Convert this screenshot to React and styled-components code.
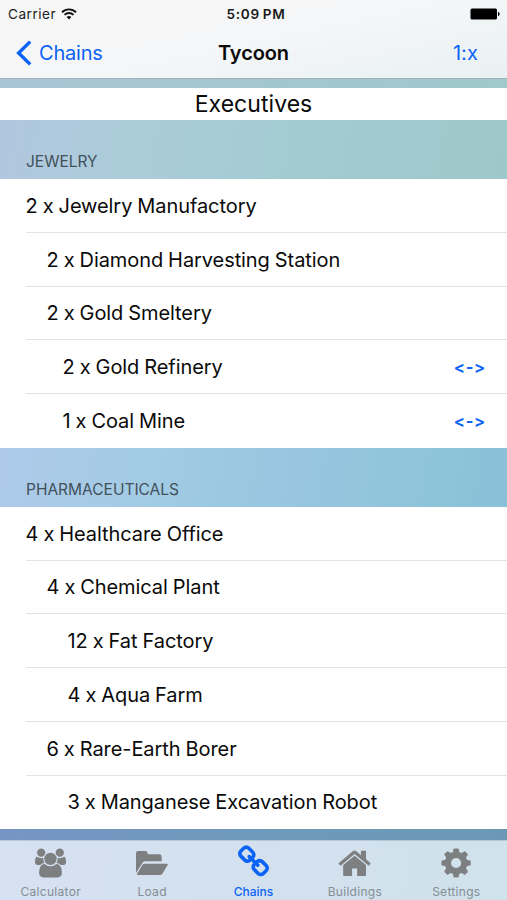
import React, { useState } from "react";
import styled, { createGlobalStyle } from "styled-components";

const GlobalStyle = createGlobalStyle`
  * {
    box-sizing: border-box;
  }
  body {
    margin: 0;
    font-family: Inter, "Liberation Sans", sans-serif;
    font-variant-ligatures: none;
    font-feature-settings: "calt" 0;
    color: #0a0a0a;
  }
`;

const Screen = styled.div`
  width: 507px;
  height: 900px;
  display: flex;
  flex-direction: column;
  overflow: hidden;
  background: linear-gradient(90deg, #7695c4, #6f9abb 50%, #6b99b5);
`;

const TopBar = styled.header`
  height: 79px;
  flex: none;
  background: linear-gradient(168deg, #f6f6f7 0%, #f5f6f7 50%, #e9f1f3 100%);
  border-bottom: 1px solid #9db3b8;
`;

const StatusBar = styled.div`
  height: 27px;
  display: grid;
  grid-template-columns: 1fr auto 1fr;
  align-items: center;
  padding: 1px 7px 0 8px;
  font-size: 13.6px;
`;

const Carrier = styled.div`
  display: flex;
  align-items: center;
  gap: 5px;
  color: #222;
  letter-spacing: 0.5px;
`;

const Clock = styled.div`
  font-size: 13.6px;
  font-weight: 600;
  letter-spacing: 0.65px;
  word-spacing: -1px;
  color: #1a1a1a;
  padding-left: 4px;
`;

const Battery = styled.svg`
  justify-self: end;
`;

const NavBar = styled.nav`
  height: 51px;
  display: grid;
  grid-template-columns: 1fr auto 1fr;
  align-items: center;
  padding: 0 29px 0 16px;
  font-size: 20px;
`;

const BackButton = styled.button`
  display: flex;
  align-items: center;
  gap: 7px;
  padding: 0;
  border: none;
  background: none;
  font: inherit;
  letter-spacing: -0.2px;
  color: #0b63f6;
  cursor: pointer;
`;

const NavTitle = styled.h1`
  margin: 0;
  padding-left: 13px;
  font-size: 20px;
  font-weight: 600;
  letter-spacing: -0.1px;
`;

const RatioButton = styled(BackButton)`
  justify-self: end;
  letter-spacing: 0.1px;
`;

const Banner = styled.div`
  flex: none;
  padding: 9px 0 0;
  background: linear-gradient(90deg, #a7c4d4, #9fc9cb);
`;

const BannerTitle = styled.div`
  height: 32px;
  background: #fff;
  text-align: center;
  font-size: 23px;
  line-height: 32px;
  letter-spacing: 0.05px;
`;

const SectionHeader = styled.h2`
  height: 59px;
  flex: none;
  display: flex;
  align-items: flex-end;
  margin: 0;
  padding: 0 26px 8px;
  background: ${({ $fill }) => $fill};
  font-size: 15.5px;
  font-weight: 400;
  line-height: 19px;
  letter-spacing: 0;
  color: #42505a;
`;

const List = styled.div`
  flex: none;
  background: #fff;
`;

const Row = styled.div`
  height: 53.75px;
  margin-left: 25.5px;
  padding: 1px 22px 0 ${({ $indent }) => $indent}px;
  display: flex;
  align-items: center;
  justify-content: space-between;
  border-bottom: 1px solid #e3e3e5;
  font-size: 20px;
  letter-spacing: -0.08px;
  word-spacing: -0.5px;
  white-space: nowrap;

  &:last-child {
    border-bottom-color: transparent;
  }
`;

const SwapButton = styled.button`
  padding: 0;
  border: none;
  background: none;
  font: inherit;
  font-size: 16.5px;
  font-weight: 700;
  letter-spacing: 0.7px;
  margin-right: -1px;
  color: #0b63f6;
  cursor: pointer;
`;

const TabBar = styled.nav`
  height: 60px;
  flex: none;
  margin-top: auto;
  display: grid;
  grid-template-columns: repeat(5, 1fr);
  background: linear-gradient(100deg, #d6e1f1, #d3e1ee 50%, #d0e2ec);
  border-top: 1px solid #b5c8d9;
`;

const Tab = styled.button`
  display: flex;
  flex-direction: column;
  align-items: center;
  padding: 5px 0 0;
  border: none;
  background: none;
  font: inherit;
  font-size: 12px;
  font-weight: ${({ $active }) => ($active ? 500 : 400)};
  letter-spacing: ${({ $active }) => ($active ? 0 : 0.3)}px;
  color: ${({ $active }) => ($active ? "#0b63f6" : "#858d95")};
  cursor: pointer;

  svg {
    height: 34px;
    overflow: visible;
    fill: ${({ $active }) => ($active ? "#0b63f6" : "#7d7f81")};
  }
`;

const TabLabel = styled.span`
  line-height: 15px;
  margin-top: 4px;
`;

const sections = [
  {
    title: "JEWELRY",
    fill: "linear-gradient(100deg, #b1c6df 0%, #abccd9 25%, #a3cbd2 55%, #9dc8c9 100%)",
    rows: [
      { label: "2 x Jewelry Manufactory", indent: 0 },
      { label: "2 x Diamond Harvesting Station", indent: 21 },
      { label: "2 x Gold Smeltery", indent: 21 },
      { label: "2 x Gold Refinery", indent: 37, swap: true },
      { label: "1 x Coal Mine", indent: 37, swap: true }
    ]
  },
  {
    title: "PHARMACEUTICALS",
    fill: "linear-gradient(100deg, #aecaea 0%, #a2cbe4 30%, #97c5df 60%, #8dc4d8 88%, #8abfd8 100%)",
    rows: [
      { label: "4 x Healthcare Office", indent: 0 },
      { label: "4 x Chemical Plant", indent: 21 },
      { label: "12 x Fat Factory", indent: 42 },
      { label: "4 x Aqua Farm", indent: 42 },
      { label: "6 x Rare-Earth Borer", indent: 21 },
      { label: "3 x Manganese Excavation Robot", indent: 42 }
    ]
  }
];

const Gear = () => (
  <>
    <circle cx="45" cy="45" r="25" fill="none" stroke="#7d7f81" strokeWidth="19" />
    {[0, 45, 90, 135].map((angle) => (
      <g key={angle} transform={`rotate(${angle} 45 45)`}>
        <path d="M35 14l2-11q.5-2.500 3-2.500h10q2.500 0 3 2.500l2 11z" />
        <path d="M35 76l2 11q.5 2.500 3 2.500h10q2.500 0 3-2.500l2-11z" />
      </g>
    ))}
  </>
);

const tabs = [
  {
    label: "Calculator",
    width: 31,
    box: "0 0 1920 1792",
    path: "M593 896q-162 5-265 128h-134q-82 0-138-40.5t-56-118.5q0-353 124-353 6 0 43.5 21t97.5 42.5 119 21.5q67 0 133-23-5 37-5 66 0 139 81 256zm1071 637q0 120-73 189.5t-194 69.5h-874q-121 0-194-69.5t-73-189.5q0-53 3.5-103.5t14-109 26.5-108.5 43-97.5 62-81 85.5-53.5 111.5-20q10 0 43 21.5t73 48 107 48 135 21.5 135-21.5 107-48 73-48 43-21.5q61 0 111.5 20t85.5 53.5 62 81 43 97.5 26.5 108.5 14 109 3.5 103.5zm-1024-1277q0 106-75 181t-181 75-181-75-75-181 75-181 181-75 181 75 75 181zm704 384q0 159-112.5 271.5t-271.5 112.5-271.5-112.5-112.5-271.5 112.5-271.5 271.5-112.5 271.5 112.5 112.5 271.5zm576 225q0 78-56 118.5t-138 40.5h-134q-103-123-265-128 81-117 81-256 0-29-5-66 66 23 133 23 59 0 119-21.5t97.5-42.5 43.5-21q124 0 124 353zm-128-609q0 106-75 181t-181 75-181-75-75-181 75-181 181-75 181 75 75 181z"
  },
  {
    label: "Load",
    width: 32,
    box: "0 0 96 74",
    path: "M0 67V8q0-7 7-7h20q5 0 7 4l2 6h34q7 0 7 7v14H27q-5 0-8 5zM26 39h66q5 0 3 4L79 69q-3 4-8 4H5q-4 0-2-3l16-27q2-4 7-4z"
  },
  {
    label: "Chains",
    width: 31,
    box: "80 112 1632 1664",
    path: "M1520 1216q0-40-28-68l-208-208q-28-28-68-28-42 0-72 32 3 3 19 18.5t21.5 21.5 15 19 13 25.5 3.5 27.5q0 40-28 68t-68 28q-15 0-27.5-3.5t-25.5-13-19-15-21.5-21.5-18.5-19q-33 31-33 73 0 40 28 68l206 207q27 27 68 27 40 0 68-26l147-146q28-28 28-67zm-703-705q0-40-28-68l-206-207q-28-28-68-28-39 0-68 27l-147 146q-28 28-28 67 0 40 28 68l208 208q27 27 68 27 42 0 72-31-3-3-19-18.5t-21.5-21.5-15-19-13-25.5-3.5-27.5q0-40 28-68t68-28q15 0 27.5 3.5t25.5 13 19 15 21.5 21.5 18.5 19q33-31 33-73zm895 705q0 120-85 203l-147 146q-83 83-203 83-121 0-204-85l-206-207q-83-83-83-203 0-123 88-209l-88-88q-86 88-208 88-120 0-204-84l-208-208q-84-84-84-204t85-203l147-146q83-83 203-83 121 0 204 85l206 207q83 83 83 203 0 123-88 209l88 88q86-88 208-88 120 0 204 84l208 208q84 84 84 204z"
  },
  {
    label: "Buildings",
    width: 32,
    box: "109 80 1614 1600",
    path: "M1472 992v480q0 26-19 45t-45 19h-384v-384h-256v384h-384q-26 0-45-19t-19-45v-480q0-1 .5-3t.5-3l575-474 575 474q1 2 1 6zm223-69l-62 74q-8 9-21 11h-3q-13 0-21-7l-692-577-692 577q-12 8-24 7-13-2-21-11l-62-74q-8-10-7-23.5t11-21.5l719-599q32-26 76-26t76 26l244 204v-195q0-14 9-23t23-9h192q14 0 23 9t9 23v408l219 182q10 8 11 21.5t-7 23.5z"
  },
  {
    label: "Settings",
    width: 29.5,
    box: "2 0 90 90",
    shape: <Gear />
  }
];

const App = () => {
  const [activeTab, setActiveTab] = useState("Chains");

  return (
    <>
      <GlobalStyle />
      <Screen>
        <TopBar>
          <StatusBar>
            <Carrier>
              Carrier
              <svg width="16" height="12" viewBox="0 0 16 12" fill="none" stroke="#111" strokeWidth="1.9">
                <path d="M1 4.2a10 10 0 0 1 14 0" />
                <path d="M3.5 6.9a6.4 6.4 0 0 1 9 0" />
                <path d="M8 11.6L5.6 9.1a3.4 3.4 0 0 1 4.8 0z" fill="#111" stroke="none" />
              </svg>
            </Carrier>
            <Clock>5:09 PM</Clock>
            <Battery width="30" height="12" viewBox="0 0 30 12">
              <rect x="0.5" y="0.5" width="26.5" height="11" rx="1.5" />
              <path d="M28 4c2.2.6 2.2 3.4 0 4z" />
            </Battery>
          </StatusBar>
          <NavBar>
            <BackButton>
              <svg width="16" height="26" viewBox="0 0 16 26" fill="none" stroke="#0b63f6" strokeWidth="3.4">
                <path d="M14.2 1.6L2.6 13l11.6 11.4" />
              </svg>
              Chains
            </BackButton>
            <NavTitle>Tycoon</NavTitle>
            <RatioButton>1:x</RatioButton>
          </NavBar>
        </TopBar>
        <Banner>
          <BannerTitle>Executives</BannerTitle>
        </Banner>
        {sections.map((section) => (
          <React.Fragment key={section.title}>
            <SectionHeader $fill={section.fill}>{section.title}</SectionHeader>
            <List>
              {section.rows.map((row) => (
                <Row key={row.label} $indent={row.indent}>
                  <span>{row.label}</span>
                  {row.swap && <SwapButton>{"<->"}</SwapButton>}
                </Row>
              ))}
            </List>
          </React.Fragment>
        ))}
        <TabBar>
          {tabs.map((tab) => (
            <Tab
              key={tab.label}
              $active={tab.label === activeTab}
              onClick={() => setActiveTab(tab.label)}
            >
              <svg width={tab.width} viewBox={tab.box}>
                {tab.shape || <path d={tab.path} />}
              </svg>
              <TabLabel>{tab.label}</TabLabel>
            </Tab>
          ))}
        </TabBar>
      </Screen>
    </>
  );
};

export default App;
